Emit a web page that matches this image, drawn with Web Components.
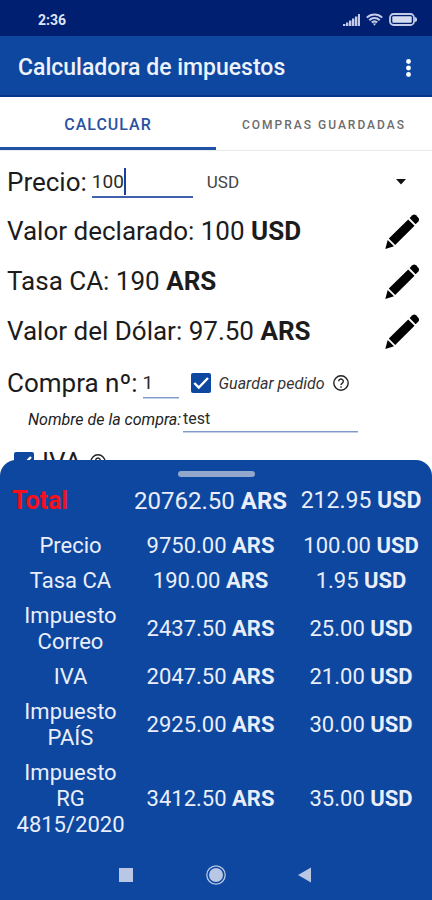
<!DOCTYPE html>
<html lang="es">
<head>
<meta charset="utf-8">
<meta name="viewport" content="width=device-width, initial-scale=1">
<title>Calculadora de impuestos</title>
<style>
  :root {
    --primary: #0e479f;
    --primary-dark: #001f71;
    --line: #7f9bc9;
    --ink: #1c1c1c;
  }
  body {
    margin: 0;
    font-family: Roboto, "Liberation Sans", sans-serif;
    color: var(--ink);
    background: #fff;
  }
</style>
</head>
<body>
<tax-app></tax-app>

<script>
const RESET = `
  * { box-sizing: border-box; }
  button, input, select { font: inherit; color: inherit; margin: 0; padding: 0; border: 0; background: none; outline: none; border-radius: 0; }
  svg { display: block; }
`;

// Every component is a static template in an open shadow root.
function define(name, styles, render, setup) {
  customElements.define(name, class extends HTMLElement {
    connectedCallback() {
      if (this.shadowRoot) return;
      this.attachShadow({ mode: "open" });
      this.shadowRoot.innerHTML = `<style>${RESET}${styles}</style>${render(this)}`;
      if (setup) setup(this);
    }
  });
}

define("status-bar", `
  :host {
    display: flex;
    align-items: center;
    justify-content: space-between;
    height: 36px;
    padding: 3px 15px 0 38px;
    background: var(--primary-dark);
    color: #dfe4f5;
    font-size: 14px;
    font-weight: 700;
  }
  .icons { display: flex; align-items: center; gap: 6px; }
`, () => `
  <span>2:36</span>
  <div class="icons">
    <svg width="17" height="12" viewBox="0 0 17 12" fill="#c3cbe6">
      <path d="M0 10h2.400v2H0zM3 8.500h2.400V12H3zM6 6.500h2.400V12H6zM9 4.500h2.400V12H9zM12 2.500h2.400V12H12zM15 0h2v12h-2z"/>
    </svg>
    <svg width="17" height="13" viewBox="0 0 17 13" fill="none" stroke="#c3cbe6" stroke-width="2">
      <path d="M.8 4.600a11 11 0 0 1 15.400 0M3.300 7.200a7.400 7.400 0 0 1 10.400 0M5.800 9.600a4 4 0 0 1 5.400 0"/>
      <path d="M6.800 10.600h3.400L8.500 12.800z" fill="#c3cbe6" stroke="none"/>
    </svg>
    <svg width="28" height="13" viewBox="0 0 28 13">
      <rect x="1" y="1" width="24" height="11" rx="3.500" fill="none" stroke="#c3cbe6" stroke-width="1.800"/>
      <rect x="3.300" y="3.200" width="19.400" height="6.600" rx="1" fill="#d5dbef"/>
      <path d="M26 4q2.200.5 2.200 2.500t-2.200 2.500z" fill="#c3cbe6"/>
    </svg>
  </div>
`);

define("app-bar", `
  :host {
    display: flex;
    align-items: center;
    justify-content: space-between;
    height: 61px;
    padding: 4px 11px 0 18px;
    background: var(--primary);
    border-bottom: 2px solid #06378c;
    color: #eef2fb;
  }
  h1 { margin: 0; font-size: 23px; font-weight: 500; line-height: 28px; }
  button { padding: 6px 10px; }
`, () => `
  <h1><slot></slot></h1>
  <button type="button" aria-label="Más opciones">
    <svg width="5" height="18" viewBox="0 0 5 18" fill="#fff">
      <circle cx="2.500" cy="2.500" r="2.400"/><circle cx="2.500" cy="9" r="2.400"/><circle cx="2.500" cy="15.500" r="2.400"/>
    </svg>
  </button>
`);

define("tab-strip", `
  :host {
    display: grid;
    grid-template-columns: 1fr 1fr;
    height: 54px;
    border-bottom: 1px solid #ebebeb;
  }
  button {
    padding-top: 5px;
    border-bottom: 3px solid transparent;
    color: #6c6c6c;
    font-size: 12px;
    font-weight: 500;
    letter-spacing: 2px;
    white-space: nowrap;
  }
  button[aria-selected="true"] {
    border-color: #1f52a5;
    color: #2852a0;
    font-size: 16px;
    letter-spacing: 1px;
  }
`, () => `
  <button type="button" role="tab" aria-selected="true">CALCULAR</button>
  <button type="button" role="tab" aria-selected="false">COMPRAS GUARDADAS</button>
`, (host) => {
  const tabs = host.shadowRoot.querySelectorAll("button");
  tabs.forEach((tab) => tab.addEventListener("click", () => {
    tabs.forEach((t) => t.setAttribute("aria-selected", String(t === tab)));
  }));
});

define("price-row", `
  :host { display: flex; align-items: center; height: 56px; padding: 6px 7px 0; }
  label { font-size: 26px; line-height: 32px; }
  .field {
    display: flex;
    align-items: center;
    flex: 0 0 101px;
    height: 32px;
    margin: 0 14px 0 5px;
    border-bottom: 2px solid #3f61ae;
    font-size: 19px;
    color: #2b2b2b;
  }
  input { field-sizing: content; max-width: 90px; caret-color: transparent; }
  .caret { width: 2px; height: 27px; background: #1d3f9c; }
  .currency { position: relative; flex: 1; }
  select { display: block; width: 100%; height: 32px; appearance: none; font-size: 17px; color: #444; }
  .currency svg { position: absolute; right: 19px; top: 13px; pointer-events: none; }
`, () => `
  <label for="price">Precio:</label>
  <div class="field"><input id="price" value="100" inputmode="decimal"><span class="caret"></span></div>
  <div class="currency">
    <select aria-label="Moneda"><option>USD</option><option>ARS</option></select>
    <svg width="10" height="6" viewBox="0 0 10 6"><path d="M0 0h10L5 5.500z" fill="#111"/></svg>
  </div>
`);

// <value-row currency="ARS">Tasa CA: 190</value-row>
define("value-row", `
  :host {
    display: flex;
    align-items: center;
    justify-content: space-between;
    height: 50px;
    padding: 0 13px 2px 7px;
    font-size: 26px;
    line-height: 32px;
  }
  b { font-weight: 700; }
`, (host) => `
  <span><slot></slot> <b>${host.getAttribute("currency")}</b></span>
  <button type="button" aria-label="Editar">
    <svg width="34" height="35" viewBox="0 0 34 35" fill="#000">
      <path d="M24.600 4L27.400 1.200Q29.300-.2 31 1.200L33.300 3.700Q34.800 5.600 33.400 7.400L30.600 10.200z"/>
      <path d="M23.200 5.400L29.500 11.800 10.200 31 3.800 24.600z"/>
      <path d="M2.700 26L9 32.300 .3 35z"/>
    </svg>
  </button>
`);

define("check-mark", `
  :host { display: block; width: 20px; height: 20px; }
  input { display: block; width: 20px; height: 20px; appearance: none; border: 2px solid #555; border-radius: 2px; }
  input:checked {
    border: 0;
    background: var(--primary);
  }
  .box { display: grid; }
  .box > * { grid-area: 1 / 1; }
  svg { pointer-events: none; }
`, (host) => `
  <div class="box">
    <input type="checkbox" checked aria-label="${host.getAttribute("label")}">
    <svg width="20" height="20" viewBox="0 0 20 20" fill="none" stroke="#fff" stroke-width="2.400"><path d="M3.300 10l4.500 4.500L17 5"/></svg>
  </div>
`);

define("help-button", `
  :host { display: block; }
  button { display: block; }
`, () => `
  <button type="button" aria-label="Ayuda">
    <svg width="16" height="16" viewBox="0 0 16 16" fill="none" stroke="#222" stroke-width="1.400">
      <circle cx="8" cy="8" r="7.200"/>
      <path d="M5.700 6.300a2.300 2.200 0 1 1 3.600 1.800c-.9.600-1.300 1-1.300 1.900"/>
      <path d="M8 11.200v1.500"/>
    </svg>
  </button>
`);

define("purchase-form", `
  :host { display: block; }
  .row { display: flex; align-items: center; }
  .number { height: 52px; padding: 0 7px; }
  .number label { font-size: 26px; line-height: 32px; }
  input { border-bottom: 1px solid var(--line); box-shadow: 0 1px 0 #c3d0e6; color: #2b2b2b; }
  #number { width: 36px; height: 30px; margin: 0 12px 0 5px; font-size: 19px; }
  .save { margin: 0 8px; font-size: 16px; font-style: italic; color: #333; }
  .name { height: 20px; padding: 0 28px; font-size: 16px; }
  .name label { font-style: italic; color: #222; white-space: nowrap; }
  #name { flex: 0 1 175px; min-width: 0; height: 26px; margin-left: 2px; }
  .tax { height: 56px; padding: 10px 14px 0; gap: 8px; font-size: 26px; line-height: 32px; }
`, () => `
  <div class="row number">
    <label for="number">Compra nº:</label>
    <input id="number" value="1" inputmode="numeric">
    <check-mark label="Guardar pedido"></check-mark>
    <span class="save">Guardar pedido</span>
    <help-button></help-button>
  </div>
  <div class="row name">
    <label for="name">Nombre de la compra:</label>
    <input id="name" value="test">
  </div>
  <div class="row tax">
    <check-mark label="IVA"></check-mark>
    <span>IVA</span>
    <help-button></help-button>
  </div>
`);

const BREAKDOWN = [
  ["Precio", "9750.00", "100.00"],
  ["Tasa CA", "190.00", "1.95"],
  ["Impuesto Correo", "2437.50", "25.00"],
  ["IVA", "2047.50", "21.00"],
  ["Impuesto PAÍS", "2925.00", "30.00"],
  ["Impuesto RG 4815/2020", "3412.50", "35.00"],
];

const cells = (ars, usd) => `<td>${ars} <b>ARS</b></td><td>${usd} <b>USD</b></td>`;

define("total-sheet", `
  :host {
    display: block;
    padding: 11px 2px 0 12px;
    background: var(--primary);
    border-radius: 16px 16px 0 0;
    color: #e9eefa;
  }
  .handle { display: block; width: 77px; height: 6px; margin: 0 auto; border-radius: 3px; background: #93a6cc; transform: translateX(-5px); }
  table { width: 100%; table-layout: fixed; border-collapse: collapse; font-size: 22px; line-height: 26px; }
  col:nth-child(1) { width: 28%; }
  col:nth-child(2) { width: 39%; }
  th, td { padding: 4px 0 5px; font-weight: 400; text-align: center; }
  td { white-space: nowrap; }
  b { font-weight: 700; }
  thead th, thead td { height: 52px; padding-bottom: 8px; font-size: 24px; }
  thead td:last-child { font-size: 23px; }
  thead th { text-align: left; font-size: 25px; font-weight: 700; color: #f5101c; }
`, () => `
  <button class="handle" type="button" aria-label="Desplegar"></button>
  <table>
    <colgroup><col><col><col></colgroup>
    <thead><tr><th scope="row">Total</th>${cells("20762.50", "212.95")}</tr></thead>
    <tbody>
      ${BREAKDOWN.map(([name, ars, usd]) => `<tr><th scope="row">${name}</th>${cells(ars, usd)}</tr>`).join("")}
    </tbody>
  </table>
`);

define("nav-bar", `
  :host {
    display: flex;
    align-items: center;
    justify-content: center;
    gap: 70px;
    height: 57px;
    padding-top: 6px;
    background: var(--primary);
  }
  button { width: 20px; height: 20px; }
`, () => `
  <button type="button" aria-label="Recientes"><svg width="20" height="20" viewBox="0 0 20 20"><path d="M3 3h14v14H3z" fill="#b9c7e4"/></svg></button>
  <button type="button" aria-label="Inicio"><svg width="20" height="20" viewBox="0 0 20 20"><circle cx="10" cy="10" r="9.200" fill="none" stroke="#b9c7e4" stroke-width="1.300"/><circle cx="10" cy="10" r="7" fill="#b9c7e4"/></svg></button>
  <button type="button" aria-label="Atrás"><svg width="20" height="20" viewBox="0 0 20 20"><path d="M15 2.500v15L2 10z" fill="#b9c7e4"/></svg></button>
`);

define("tax-app", `
  :host { display: flex; flex-direction: column; height: 100vh; }
  main { flex: 1; min-height: 0; overflow: hidden; }
  total-sheet { position: relative; flex: none; margin-top: -16px; }
  status-bar, app-bar, tab-strip, nav-bar { flex: none; }
`, () => `
  <status-bar></status-bar>
  <app-bar>Calculadora de impuestos</app-bar>
  <tab-strip role="tablist"></tab-strip>
  <main>
    <price-row></price-row>
    <value-row currency="USD">Valor declarado: 100</value-row>
    <value-row currency="ARS">Tasa CA: 190</value-row>
    <value-row currency="ARS">Valor del Dólar: 97.50</value-row>
    <purchase-form></purchase-form>
  </main>
  <total-sheet></total-sheet>
  <nav-bar></nav-bar>
`);
</script>
</body>
</html>
